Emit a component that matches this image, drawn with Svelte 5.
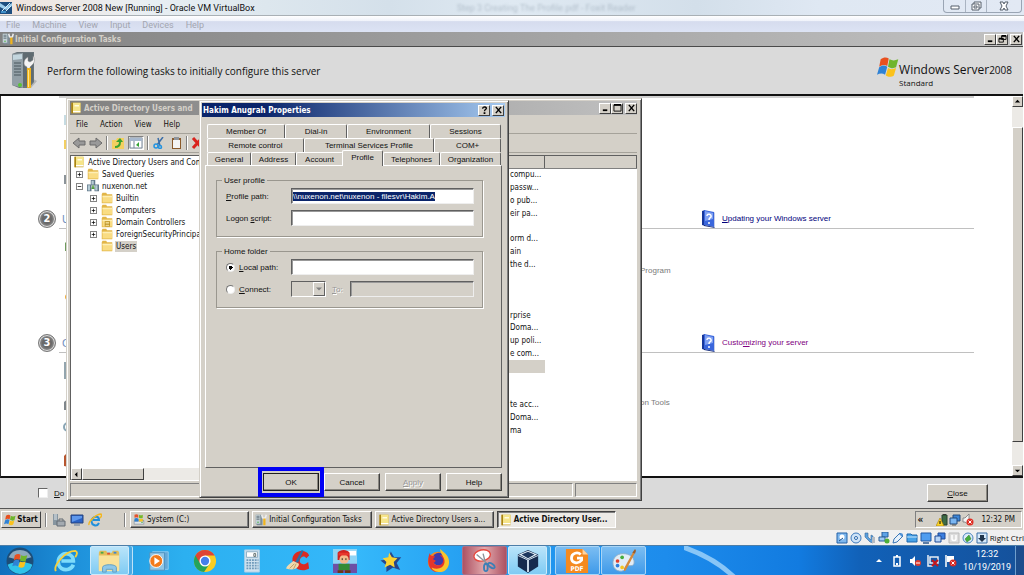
<script>
    import { onMount } from 'svelte';

    let profilePath = $state('\\\\nuxenon.net\\nuxenon - filesvr\\Hakim.A');
    let homeMode = $state('local');
    let activeTab = $state('Profile');
    let pathInput;

    const vboxMenu = ['File', 'Machine', 'View', 'Input', 'Devices', 'Help'];
    const mmcMenu = ['File', 'Action', 'View', 'Help'];

    const tabRows = [
        { name: 'back', tabs: ['Member Of', 'Dial-in', 'Environment', 'Sessions'] },
        { name: 'middle', tabs: ['Remote control', 'Terminal Services Profile', 'COM+'] },
        { name: 'front', tabs: ['General', 'Address', 'Account', 'Profile', 'Telephones', 'Organization'] }
    ];

    const tree = [
        { label: 'Active Directory Users and Com', icon: 'book', level: 'root', box: '' },
        { label: 'Saved Queries', icon: 'folder', level: 'one', box: '+' },
        { label: 'nuxenon.net', icon: 'domain', level: 'one', box: '-' },
        { label: 'Builtin', icon: 'folder', level: 'two', box: '+' },
        { label: 'Computers', icon: 'folder', level: 'two', box: '+' },
        { label: 'Domain Controllers', icon: 'ou', level: 'two', box: '+' },
        { label: 'ForeignSecurityPrincipals', icon: 'folder', level: 'two', box: '+' },
        { label: 'Users', icon: 'folder', level: 'two', box: '', selected: true }
    ];

    const descriptions = [
        'compu...', 'passw...', 'o pub...', 'eir pa...', '', 'orm d...', 'ain',
        'the d...', '', '', '', 'rprise', 'Doma...', 'up poli...', 'e com...',
        '', '', '', 'te acc...', 'Doma...', 'ma'
    ];
    const selectedRow = 15;

    const guestTasks = [
        { label: 'System (C:)', icon: 'drive' },
        { label: 'Initial Configuration Tasks', icon: 'server' },
        { label: 'Active Directory Users a...', icon: 'book' },
        { label: 'Active Directory User...', icon: 'book', active: true }
    ];

    const statusIcons = ['disk', 'cd', 'sound', 'net', 'usb', 'share', 'display', 'windows', 'rec', 'mouse', 'key'];

    const hostApps = [
        { icon: 'ie', state: '' },
        { icon: 'explorer', state: 'open stack' },
        { icon: 'player', state: '' },
        { icon: 'chrome', state: '' },
        { icon: 'calc', state: '' },
        { icon: 'ccleaner', state: '' },
        { icon: 'game', state: '' },
        { icon: 'star', state: '' },
        { icon: 'firefox', state: '' },
        { icon: 'snip', state: 'alert' },
        { icon: 'vbox', state: 'open stack' },
        { icon: 'foxit', state: 'running' },
        { icon: 'paint', state: 'running' }
    ];

    onMount(() => {
        pathInput.focus();
        pathInput.select();
    });
</script>

{#snippet small(name)}
    <svg class="ico" viewBox="0 0 16 16" aria-hidden="true">
        {#if name === 'book'}
            <path d="M2 1h12v14H2z" fill="#c9a227" />
            <path d="M4 1h10v11H4z" fill="#f6e58a" />
            <path d="M6 4h6v2H6z" fill="#fffbe0" />
            <path d="M2 1h2v14H2z" fill="#a98412" />
            <path d="M4 12h10v2H4z" fill="#fff" />
        {:else if name === 'folder' || name === 'ou'}
            <path d="M1 3l1-2h5l1 2h7v12H1z" fill="#e2b548" />
            <path d="M2 5h13v9H2z" fill="#f9dc83" />
            <path d="M2 5h13v2H2z" fill="#fdeeb5" />
            {#if name === 'ou'}
                <path d="M5 7h7v7H5z" fill="#b98d1e" />
                <path d="M6 8h5v1H6zM6 10h5v1H6zM6 12h5v1H6z" fill="#fff0b0" />
            {/if}
        {:else if name === 'domain'}
            <path d="M5 0h6v7H5zM0 6h6v9H0zM10 6h6v9h-6z" fill="#62798a" />
            <path d="M6 1h3v5H6zM1 7h3v7H1zM11 7h3v7h-3z" fill="#b7ccd6" />
            <path d="M8 7v5M6 11h4" stroke="#4d9a3a" stroke-width="2" />
        {:else if name === 'server'}
            <path d="M1 1h7l2 2v12H3L1 13z" fill="#7e8e98" />
            <path d="M1 1h6v12H1z" fill="#c4d0d6" />
            <path d="M2 3h4M2 5h4M2 7h4" stroke="#51606a" />
            <circle cx="4" cy="11" r="1" fill="#4db848" />
            <path d="M9 1l1 4 2 1 2-1 1-4" fill="none" stroke="#eee" stroke-width="2" />
            <path d="M11 6h3v9h-3z" fill="#f0b41c" />
        {:else if name === 'drive'}
            <path d="M1 9l2-2h10l2 2v5H1z" fill="#8f9aa3" />
            <path d="M2 10h12v3H2z" fill="#dfe5ea" />
            <path d="M11 11h2v1h-2z" fill="#38a838" />
            <path d="M2 1c2-1 3-1 5 0v4C5 4 4 4 2 5z" fill="#e5522b" />
            <path d="M8 1c2 1 3 1 5 0v4c-2 1-3 1-5 0z" fill="#76b82a" />
            <path d="M2 6c2-1 3-1 5 0v4H2z" fill="#2d7fd0" />
            <path d="M8 6c2 1 3 1 5 0v4H8z" fill="#f8c51c" />
        {/if}
    </svg>
{/snippet}

{#snippet flag()}
    <path d="M5 4c4-3 8-3 11-1l-2 10c-3-2-7-2-11 1z" fill="#e8501f" />
    <path d="M17 4c4 2 7 2 12 0l-3 11c-4 2-8 1-11-1z" fill="#6fb52c" />
    <path d="M3 15c4-3 7-3 11-1l-3 11c-3-2-7-2-11 0z" fill="#2f82d5" />
    <path d="M15 16c3 2 7 2 11 0l-3 10c-4 3-8 2-11 0z" fill="#fbc21b" />
{/snippet}

{#snippet helpBook()}
    <svg class="help-book" viewBox="0 0 16 18" aria-hidden="true">
        <path d="M1 1l3-1v16l-3-1z" fill="#17379b" />
        <path d="M3 0l10 2v15L3 15z" fill="#3a66dc" />
        <path d="M4 1l8 2v6L4 11z" fill="#7fa0f2" />
        <path d="M13 2l1 1v14l-1 1z" fill="#c7cfe6" />
        <path d="M3 15l10 2 1 1-11-2z" fill="#12297a" />
        <path d="M6 6c0-3 5-2 4 1-1 1-2 1-2 3" fill="none" stroke="#fff" stroke-width="1.5" />
        <circle cx="8" cy="13" r="1" fill="#fff" />
    </svg>
{/snippet}

{#snippet caption(kind)}
    <button class="cap" aria-label={kind}>
        <svg viewBox="0 0 10 9" aria-hidden="true">
            {#if kind === 'Minimize'}
                <path d="M2 7h5" stroke="#000" stroke-width="2" />
            {:else if kind === 'Maximize'}
                <path d="M1 1h8v7H1z" fill="none" stroke="#000" />
                <path d="M1 1h8" stroke="#000" stroke-width="2" />
            {:else if kind === 'Restore'}
                <path d="M4 1h5v4H4zM1 4h5v4H1z" fill="#d4d0c8" stroke="#000" />
                <path d="M4 1h5M1 4h5" stroke="#000" stroke-width="2" />
            {:else if kind === 'Help'}
                <path d="M3 3c0-3 5-2 4 0-1 1-2 1-2 3" fill="none" stroke="#000" stroke-width="1.5" />
                <path d="M4 7h2v2H4z" />
            {:else}
                <path d="M2 1l6 7M8 1L2 8" stroke="#000" stroke-width="1.6" />
            {/if}
        </svg>
    </button>
{/snippet}

<div class="screen">
    <header class="vbox-title">
        <svg class="vbox-logo" viewBox="0 0 12 12" aria-hidden="true">
            <path d="M0 0h12v12H0z" fill="#1d4f80" />
            <path d="M0 1l6 4 6-4v3L6 8 0 5z" fill="#9ed0ee" />
            <path d="M1 10L10 1M4 11l7-7" stroke="#d8effa" />
            <path d="M1 9h5v2H1z" fill="#3f8fc8" />
        </svg>
        <span>Windows Server 2008 New [Running] - Oracle VM VirtualBox</span>
        <span class="behind-glass">Step 3 Creating The Profile.pdf - Foxit Reader</span>
        <div class="aero-buttons">
            <button aria-label="Minimize window">
                <svg viewBox="0 0 12 10"><path d="M2 5h8v3H2z" fill="#fff" stroke="#555e6b" /></svg>
            </button>
            <button aria-label="Restore window">
                <svg viewBox="0 0 12 10"><path d="M4 1h7v6H4z" fill="#fff" stroke="#555e6b" /><path d="M2 3h7v6H2z" fill="#fff" stroke="#555e6b" /><path d="M4 5h3v2H4z" fill="#fff" stroke="#555e6b" /></svg>
            </button>
            <button class="wide" aria-label="Close window">
                <svg viewBox="0 0 12 10"><path d="M2 1h3l1 2 1-2h3L8 5l2 4H7L6 7 5 9H2l2-4z" fill="#fff" stroke="#555e6b" /></svg>
            </button>
        </div>
    </header>

    <nav class="vbox-menu">
        {#each vboxMenu as item}
            <button>{item}</button>
        {/each}
    </nav>

    <main class="guest">
        <div class="ict-title">
            {@render small('server')}
            <span>Initial Configuration Tasks</span>
            <div class="caps">
                {@render caption('Minimize')}
                {@render caption('Restore')}
                {@render caption('Close')}
            </div>
        </div>

        <div class="banner">
            <svg class="banner-server" viewBox="0 0 26 38" aria-hidden="true">
                <path d="M20 26l6 3-6 7z" fill="#b4b4b4" />
                <path d="M1 2l5-2h17v30l-5 6H8L1 33z" fill="#68747a" />
                <path d="M1 2l11-1v35L1 33z" fill="#929fa6" />
                <path d="M2 3l9-1v5L2 8z" fill="#c3d6de" />
                <path d="M3 11h7M3 14h7M3 17h7M3 20h7M3 23h7" stroke="#49565d" />
                <path d="M12 1h10v28l-4 5h-6z" fill="#5f6b71" />
                <circle cx="9" cy="33" r="2" fill="#58c436" />
                <path d="M13 11c0-3 2-5 4-6v4l2 1 3-2V4c2 2 2 6 0 8l-3 3v4h-3v-4c-2-1-3-2-3-4z" fill="#f4f4f4" stroke="#888" stroke-width=".5" />
                <path d="M16 16h4v20h-4z" fill="#f2b51d" />
                <path d="M17 18h1v17h-1z" fill="#ffe48a" />
            </svg>
            <h1>Perform the following tasks to initially configure this server</h1>
            <div class="brand">
                <svg viewBox="0 0 30 29" aria-hidden="true">{@render flag()}</svg>
                <div class="brand-text">
                    <p class="brand-name">Windows Server<span>2008</span></p>
                    <p class="brand-edition">Standard</p>
                </div>
            </div>
        </div>

        <div class="ict-body">
            <div class="tasks">
                <div class="rule-top"></div>
                <section>
                    <div class="step">
                        <b>2</b>
                        <span class="step-title">U</span>
                        <a href="#updating">{@render helpBook()}<span><u>U</u>pdating your Windows server</span></a>
                    </div>
                    <p class="note">Program</p>
                </section>
                <section>
                    <div class="step">
                        <b>3</b>
                        <span class="step-title">C</span>
                        <a class="visited" href="#customizing">{@render helpBook()}<span>Custo<u>m</u>izing your server</span></a>
                    </div>
                    <p class="note low">on Tools</p>
                </section>
                <svg class="task-icons" viewBox="0 0 6 380" aria-hidden="true">
                    <path d="M1 19h5v10H1z" fill="#c6dbe2" />
                    <path d="M1 44h5v9H1z" fill="#f2cf62" />
                    <path d="M1 79h5v9H1z" fill="#8b9399" />
                    <path d="M2 147l4-4v12H2z" fill="#6e9b5e" />
                    <circle cx="5" cy="201" r="3" fill="#f2ae3b" />
                    <path d="M1 266h5v17H1z" fill="#93a5ae" />
                    <path d="M1 306l5-4v12H1z" fill="#7f868b" />
                    <circle cx="5" cy="331" r="4" fill="none" stroke="#89a5b4" stroke-width="2" />
                    <path d="M1 360l5-5v16l-5-1z" fill="#b7562f" />
                </svg>
            </div>
            <div class="vscroll">
                <button class="arrow" aria-label="Scroll up"><svg viewBox="0 0 8 8"><path d="M1 5l3-3 3 3z" /></svg></button>
                <div class="track"><div class="thumb"></div></div>
                <button class="arrow" aria-label="Scroll down"><svg viewBox="0 0 8 8"><path d="M1 3l3 3 3-3z" /></svg></button>
            </div>
        </div>

        <div class="ict-footer">
            <label><input type="checkbox" /><span><u>D</u>o</span></label>
            <button class="btn close-btn"><u>C</u>lose</button>
        </div>

        <div class="window mmc">
            <div class="mmc-title">
                {@render small('book')}
                <span>Active Directory Users and</span>
                <div class="caps">
                    {@render caption('Minimize')}
                    {@render caption('Maximize')}
                    {@render caption('Close')}
                </div>
            </div>
            <nav class="mmc-menu">
                {#each mmcMenu as item}
                    <button>{item}</button>
                {/each}
            </nav>
            <div class="toolbar">
                <button aria-label="Back"><svg viewBox="0 0 14 12"><path d="M1 6l6-5v3h6v4H7v3z" fill="#999" stroke="#6b6b6b" /></svg></button>
                <button aria-label="Forward"><svg viewBox="0 0 14 12"><path d="M13 6L7 1v3H1v4h6v3z" fill="#999" stroke="#6b6b6b" /></svg></button>
                <i></i>
                <button aria-label="Up one level"><svg viewBox="0 0 14 12"><path d="M1 3h4l1-2h7v11H1z" fill="#f3cf60" /><path d="M4 10c4 0 5-2 5-5" fill="none" stroke="#39a22e" stroke-width="2" /><path d="M5 5l4-4 3 4z" fill="#39a22e" /></svg></button>
                <button class="pressed" aria-label="Show tree"><svg viewBox="0 0 14 12"><path d="M1 1h12v10H1z" fill="#fff" stroke="#77879b" /><path d="M1 1h12v3H1z" fill="#a7b8ce" /><path d="M5 4v7" stroke="#77879b" /><path d="M10 5v5L7 8z" fill="#35a335" /></svg></button>
                <i></i>
                <button aria-label="Cut"><svg viewBox="0 0 14 12"><path d="M11 0L5 8M6 1l2 8" stroke="#3b6ea8" stroke-width="1.5" /><circle cx="4" cy="9" r="2" fill="none" stroke="#2493df" stroke-width="1.5" /><circle cx="8" cy="10" r="1.5" fill="none" stroke="#2493df" stroke-width="1.5" /></svg></button>
                <button aria-label="Paste"><svg viewBox="0 0 14 12"><path d="M3 1h9v11H3z" fill="#8a5a2b" /><path d="M4 3h7v8H4z" fill="#f4f4f4" /><path d="M5 0h5v3H5z" fill="#8f959c" /></svg></button>
                <i></i>
                <button aria-label="Delete"><svg viewBox="0 0 14 12"><path d="M2 1l9 10M11 1L2 11" stroke="#d9231d" stroke-width="3" /></svg></button>
            </div>
            <div class="panes">
                <div class="tree-pane">
                    <ul>
                        {#each tree as node}
                            <li class={node.level}>
                                {#if node.level !== 'root'}
                                    <span class="expander" class:blank={!node.box}>
                                        {#if node.box}
                                            <svg viewBox="0 0 7 7" aria-hidden="true"><path d={node.box === '+' ? 'M1 3.5h5M3.5 1v5' : 'M1 3.5h5'} stroke="#000" /></svg>
                                        {/if}
                                    </span>
                                {/if}
                                {@render small(node.icon)}
                                <span class="node" class:selected={node.selected}>{node.label}</span>
                            </li>
                        {/each}
                    </ul>
                    <div class="hscroll">
                        <button class="arrow" aria-label="Scroll left"><svg viewBox="0 0 8 8"><path d="M5 1L2 4l3 3z" /></svg></button>
                        <div class="thumb"></div>
                    </div>
                </div>
                <div class="list-pane">
                    <table>
                        <thead><tr><th aria-label="Description"></th><th aria-label="Blank"></th></tr></thead>
                        <tbody>
                            {#each descriptions as text, i}
                                <tr><td class:selected={i === selectedRow}>{text}</td><td></td></tr>
                            {/each}
                        </tbody>
                    </table>
                </div>
            </div>
            <div class="mmc-status"><span></span><span></span></div>
        </div>

        <div class="window dialog" role="dialog" aria-label="Hakim Anugrah Properties">
            <div class="dialog-title">
                <span>Hakim Anugrah Properties</span>
                <div class="caps">
                    {@render caption('Help')}
                    {@render caption('Close')}
                </div>
            </div>
            <div class="tabs">
                {#each tabRows as row}
                    <div class="tab-row {row.name}">
                        {#each row.tabs as tab}
                            <button class="tab" class:active={tab === activeTab} onclick={() => (activeTab = tab)}>{tab}</button>
                        {/each}
                    </div>
                {/each}
            </div>
            <div class="panel">
                <fieldset>
                    <legend>User profile</legend>
                    <div class="field">
                        <label for="profile-path"><span><u>P</u>rofile path:</span></label>
                        <input id="profile-path" type="text" bind:this={pathInput} bind:value={profilePath} spellcheck="false" />
                    </div>
                    <div class="field">
                        <label for="logon-script"><span>Logon <u>s</u>cript:</span></label>
                        <input id="logon-script" type="text" />
                    </div>
                </fieldset>
                <fieldset>
                    <legend>Home folder</legend>
                    <div class="field">
                        <label><input type="radio" value="local" bind:group={homeMode} /><span><u>L</u>ocal path:</span></label>
                        <input type="text" aria-label="Local path" />
                    </div>
                    <div class="field">
                        <label><input type="radio" value="connect" bind:group={homeMode} /><span><u>C</u>onnect:</span></label>
                        <div class="connect">
                            <span class="drop">
                                <select disabled aria-label="Drive"><option></option></select>
                                <svg viewBox="0 0 8 8" aria-hidden="true"><path d="M0 2l4 4 4-4z" fill="#808080" /></svg>
                            </span>
                            <label class="to" for="connect-to"><u>T</u>o:</label>
                            <input id="connect-to" type="text" disabled />
                        </div>
                    </div>
                </fieldset>
            </div>
            <div class="dialog-buttons">
                <button class="btn default">OK</button>
                <button class="btn">Cancel</button>
                <button class="btn" disabled><u>A</u>pply</button>
                <button class="btn">Help</button>
            </div>
        </div>
    </main>

    <div class="guest-bar">
        <button class="start">
            <svg viewBox="0 0 30 29" aria-hidden="true">{@render flag()}</svg>Start
        </button>
        <i></i>
        <div class="quick">
            <svg viewBox="0 0 14 14" aria-label="Server Manager"><path d="M1 1h5v11H1z" fill="#8796a0" /><path d="M2 2h3M2 4h3M2 6h3" stroke="#e4ebef" /><path d="M5 8h8v5H5z" fill="#a3aab0" stroke="#636b72" /><path d="M7 8V6h4v2" fill="none" stroke="#636b72" /></svg>
            <svg viewBox="0 0 14 14" aria-label="Show Desktop"><path d="M1 2h12v8H1z" fill="#2b62c4" stroke="#26437c" /><path d="M2 3h10v2L2 9z" fill="#5f98ec" /><path d="M4 12h6" stroke="#9aa4b0" stroke-width="2" /></svg>
            <svg viewBox="0 0 14 14" aria-label="Internet Explorer"><path d="M11 10c-1 2-3 3-5 2-3-1-3-5-1-7s6-2 6 2H5" fill="none" stroke="#1f8fdc" stroke-width="2" /><path d="M1 12C0 9 8 1 13 1c1 1 0 3-1 4" fill="none" stroke="#f3b71f" stroke-width="1.4" /></svg>
        </div>
        <i></i>
        <div class="guest-tasks">
            {#each guestTasks as task}
                <button class:active={task.active}>{@render small(task.icon)}<span>{task.label}</span></button>
            {/each}
        </div>
        <div class="guest-tray">
            <b>«</b>
            <svg viewBox="0 0 12 12" aria-hidden="true"><path d="M6 1h5v10H6z" fill="#3d6b45" stroke="#28432d" /><path d="M7 0h3v1H7z" fill="#333" /><path d="M4 4l4 8H0z" fill="#fbd327" stroke="#a67d00" stroke-width=".6" /><path d="M4 7v3" stroke="#000" /></svg>
            <svg viewBox="0 0 12 12" aria-hidden="true"><path d="M4 1h7v6H4z" fill="#3d86d8" stroke="#234a7d" /><path d="M1 4h7v6H1z" fill="#7bb6f1" stroke="#234a7d" /><path d="M3 11h4" stroke="#555" /></svg>
            <svg viewBox="0 0 12 12" aria-hidden="true"><path d="M1 4h2l4-4v11L3 8H1z" fill="#f5f5f5" stroke="#777" stroke-width=".8" /><circle cx="8" cy="8" r="3.5" fill="#e02f24" /><path d="M6.5 6.5l3 3M9.5 6.5l-3 3" stroke="#fff" /></svg>
            <span>12:32 PM</span>
        </div>
    </div>

    <div class="vbox-status">
        {#each statusIcons as name}
            <svg viewBox="0 0 12 12" aria-hidden="true">
                {#if name === 'disk'}
                    <path d="M1 1h10v10H1z" fill="#7db7ee" stroke="#2463a8" /><circle cx="6" cy="5" r="2.5" fill="#fff" /><path d="M3 9l4-3" stroke="#1d4f8b" />
                {:else if name === 'cd'}
                    <circle cx="6" cy="6" r="5" fill="#cfe4f8" stroke="#3b78bb" /><circle cx="6" cy="6" r="1.5" fill="#fff" stroke="#2a67ad" />
                {:else if name === 'sound'}
                    <path d="M1 1h3v4l3 3V3l2 1v7l-3-1-5-5z" fill="#5aa0df" stroke="#3b6a9b" stroke-width=".6" /><path d="M8 5h3v6H8z" fill="#b5bcc4" />
                {:else if name === 'net'}
                    <path d="M4 0h6v5H4z" fill="#5ea3e6" stroke="#2b5f99" /><path d="M1 5h6v4H1z" fill="#9ecbf3" stroke="#2b5f99" /><circle cx="9" cy="9" r="2.5" fill="#4fb037" />
                {:else if name === 'usb'}
                    <path d="M1 11l1-4 6-6 3 3-6 6z" fill="#e6f1fb" stroke="#3a76b6" /><path d="M7 2l3 3 1-3-2-1z" fill="#5193d7" />
                {:else if name === 'share'}
                    <path d="M1 2h4l1 1h5v7H1z" fill="#46a2e8" stroke="#1c66ad" /><path d="M1 5h10" stroke="#c8e5fb" />
                {:else if name === 'display'}
                    <path d="M1 1h10v8H1z" fill="#4f9df0" stroke="#2059a3" /><path d="M3 11h6" stroke="#5c7ea6" stroke-width="2" />
                {:else if name === 'windows'}
                    <path d="M4 1h7v6H4z" fill="#3b7fe0" stroke="#1f4b96" /><path d="M1 4h6v6H1z" fill="#b6d4f6" stroke="#1f4b96" />
                {:else if name === 'rec'}
                    <path d="M1 1h10v10H1z" fill="#ddd" stroke="#bbb" /><path d="M4 3v4c0 2 4 2 4 0V3" fill="none" stroke="#fff" stroke-width="1.5" />
                {:else if name === 'mouse'}
                    <circle cx="6" cy="6" r="5" fill="#dbeaf8" stroke="#4a84bd" /><path d="M3 7l4-4 2 4-4 3z" fill="#46ad3b" stroke="#2c7a24" stroke-width=".5" />
                {:else}
                    <path d="M1 1h10v10H1z" fill="#d6e9fa" stroke="#3a6ea5" /><path d="M4 3h4v3h2L6 10 2 6h2z" fill="#20354c" />
                {/if}
            </svg>
        {/each}
        <span>Right Ctrl</span>
    </div>

    <footer class="host-bar">
        <svg class="glow" viewBox="0 0 340 30" preserveAspectRatio="none" aria-hidden="true">
            <path d="M-4 0C20 8 36 18 50 32" fill="none" stroke="#a4d6fb" stroke-width="5" />
        </svg>
        <button class="orb" aria-label="Start menu">
            <svg viewBox="0 0 54 54" aria-hidden="true">
                <circle cx="27" cy="27" r="26" fill="#1d4d77" />
                <path d="M3 34a25 25 0 0 0 48 0C38 28 16 28 3 34z" fill="#2fc3ea" />
                <path d="M5 20a24 24 0 0 1 44 0C36 25 18 25 5 20z" fill="#8ca9bd" />
                <g transform="translate(12 12)">{@render flag()}</g>
            </svg>
        </button>
        <div class="apps">
            {#each hostApps as app}
                <button class="app {app.state}" aria-label={app.icon}>
                    <svg viewBox="0 0 26 26" aria-hidden="true">
                        {#if app.icon === 'ie'}
                            <path d="M21 17c-2 5-8 7-13 4-5-4-4-11 0-14 5-4 13-1 13 6H8" fill="none" stroke="#7ddcfb" stroke-width="4" />
                            <path d="M2 24C-1 18 12 2 23 2c3 1 2 4 0 7" fill="none" stroke="#f6cf3c" stroke-width="2" />
                        {:else if app.icon === 'explorer'}
                            <path d="M2 4l1-2h7l1 2h5l1-2h6l1 2v19H2z" fill="#e4bd58" />
                            <path d="M2 7h22v17H2z" fill="#fae29a" />
                            <path d="M4 3h3v2H4z" fill="#4aa84a" /><path d="M11 4h3v2h-3z" fill="#e24f33" /><path d="M18 3h3v2h-3z" fill="#3f87d1" />
                            <path d="M6 25v-5c0-4 15-4 15 0v5h-4v-3h-7v3z" fill="#8ec7e8" stroke="#5c9cc2" />
                        {:else if app.icon === 'player'}
                            <path d="M6 3h17v19H6z" fill="#62a9d9" stroke="#91cdef" />
                            <path d="M3 4h16v19H3z" fill="#8fc6e6" stroke="#4e92bf" />
                            <circle cx="10" cy="13" r="7" fill="#f27a1a" stroke="#fff" />
                            <path d="M8 9l6 4-6 4z" fill="#fff" />
                        {:else if app.icon === 'chrome'}
                            <circle cx="13" cy="13" r="12" fill="#f9cd22" />
                            <path d="M13 13L2.6 7A12 12 0 0 1 23.4 7H13z" fill="#de4435" />
                            <path d="M2.6 7A12 12 0 0 0 12 25l6-9-5-3z" fill="#24a35a" />
                            <path d="M2.6 7L8 16l5-9z" fill="#de4435" />
                            <circle cx="13" cy="13" r="6" fill="#fff" />
                            <circle cx="13" cy="13" r="4.5" fill="#447fec" />
                        {:else if app.icon === 'calc'}
                            <path d="M5 1h16v24H5z" fill="#cfe2ef" stroke="#a9cde6" />
                            <path d="M7 3h12v6H7z" fill="#fff" stroke="#89aac1" />
                            <path d="M15 5h2v3h-2z" fill="none" stroke="#566" />
                            <path d="M7 12h13M7 15h13M7 18h13M7 21h13" stroke="#6f9abb" stroke-width="2" stroke-dasharray="2 1" />
                        {:else if app.icon === 'ccleaner'}
                            <path d="M25 7C23 0 9 0 7 10c-1 11 10 16 18 11l-1-7c-4 4-10 3-9-2 1-4 5-5 7-2z" fill="#db2b22" />
                            <path d="M17 1l2 1-6 13-3-1z" fill="#2e6ea6" />
                            <path d="M8 13l6 3c0 5-6 8-14 5 1-3 4-5 8-8z" fill="#efd9ae" />
                            <path d="M4 21l5-5M8 22l3-6" stroke="#c09a5c" />
                        {:else if app.icon === 'game'}
                            <path d="M0 0h26v26H0z" fill="#8fd4f5" />
                            <path d="M0 16h26v10H0z" fill="#6d50a5" />
                            <path d="M16 2h9v5h-9z" fill="#fff" />
                            <path d="M5 4c3-4 10-4 13 0v8H5z" fill="#cf2020" />
                            <circle cx="12" cy="11" r="5" fill="#f4b98c" />
                            <path d="M6 4h11v3H6z" fill="#e8352c" />
                            <path d="M10 10v2M14 10v2" stroke="#221" />
                            <path d="M6 16h12v7H6z" fill="#338b35" />
                            <path d="M5 23h6v3H5zM13 23h6v3h-6z" fill="#6d3419" />
                        {:else if app.icon === 'star'}
                            <path d="M13 5l3 5 6 0-4 5 3 6-6-2-6 4 0-6-5-4 6-1z" fill="#27478c" stroke="#27478c" stroke-width="2" />
                            <path d="M11 4l3 5 6 1-4 4 1 6-5-3-6 3 2-6-4-4 6-1z" fill="#fbd433" />
                        {:else if app.icon === 'firefox'}
                            <circle cx="13" cy="14" r="11" fill="#f5891f" />
                            <circle cx="14" cy="11" r="7" fill="#3c3baf" />
                            <path d="M4 4c0 4 3 3 6 4-2 2-3 3-1 4 2 0 2 2-1 3 2 4 8 4 10 0 2-4-1-7-3-8 5-1 8 3 8 8 0 7-5 10-10 10C4 25 0 15 4 4z" fill="#e5352b" />
                            <path d="M15 0c5 4 10 7 10 14s-5 11-10 11c-4 0-8-2-9-5 6 3 13 1 14-5s-4-8-5-15z" fill="#fbc42d" />
                        {:else if app.icon === 'snip'}
                            <ellipse cx="11" cy="7" rx="9" ry="6" fill="#fff" stroke="#e6483f" stroke-width="1.5" transform="rotate(-12 11 7)" />
                            <path d="M5 6l13 11M12 5l3 12" stroke="#8d939a" stroke-width="1.5" />
                            <ellipse cx="21" cy="18" rx="4" ry="2" fill="none" stroke="#3b7fb6" stroke-width="2" transform="rotate(35 21 18)" />
                            <ellipse cx="15" cy="20" rx="2" ry="4" fill="none" stroke="#3b7fb6" stroke-width="2" />
                        {:else if app.icon === 'vbox'}
                            <path d="M13 1l11 5v13l-11 7L2 19V6z" fill="#162b4e" />
                            <path d="M13 2l10 4-10 5L3 6z" fill="#e5f1fa" /><path d="M13 3l7 3-7 4-7-4z" fill="#1d375e" />
                            <path d="M13 12v13" stroke="#d7e7f5" stroke-width="2" />
                            <path d="M2 7l11 5 11-5" fill="none" stroke="#d7e7f5" />
                        {:else if app.icon === 'foxit'}
                            <path d="M1 0h18l6 6v20H1z" fill="#f58a1f" />
                            <path d="M19 0v6h6z" fill="#ffd3a1" />
                            <path d="M17 6c-3-3-10-2-10 4 0 5 7 7 11 2v-2h-5" fill="none" stroke="#fff" stroke-width="3" />
                            <text x="13" y="24" text-anchor="middle" font-size="7" font-weight="bold" fill="#fff">PDF</text>
                        {:else}
                            <path d="M12 5c7 0 12 4 12 9s-4 4-7 4-2 6-7 6C4 24 1 20 1 15S5 5 12 5z" fill="#e2edf6" stroke="#8bacc8" />
                            <circle cx="6" cy="13" r="2" fill="#e1402e" /><circle cx="11" cy="9" r="2" fill="#45ad3e" /><circle cx="6" cy="18" r="2" fill="#2f7ede" /><circle cx="11" cy="20" r="2" fill="#f3c524" />
                            <path d="M23 3l2 1-10 19-2 1 0-3z" fill="#d5893a" />
                            <path d="M22 4l3-4 1 2-1 3z" fill="#9b5d2a" />
                        {/if}
                    </svg>
                </button>
            {/each}
        </div>
        <div class="host-tray">
            <svg viewBox="0 0 12 12" aria-label="Show hidden icons"><path d="M3 7l3-3 3 3z" fill="#fff" /></svg>
            <svg viewBox="0 0 12 12" aria-label="Battery"><path d="M3 2h6v9H3z" fill="none" stroke="#fff" stroke-width="1.5" /><path d="M5 0h2v2H5zM5 8h2v2H5z" fill="#fff" /></svg>
            <svg viewBox="0 0 12 12" aria-label="Volume"><path d="M1 4h2l3-3v10L3 8H1z" fill="#fff" /><circle cx="9" cy="8" r="3" fill="#e23b2c" /><path d="M7 8h4" stroke="#fff" /></svg>
            <svg viewBox="0 0 12 12" aria-label="Network"><path d="M3 2h8v6H3zM1 0v5M1 5v6h5" fill="none" stroke="#e8eef5" stroke-width="1.5" /><path d="M5 5l6 6M11 5l-6 6" stroke="#c4161c" stroke-width="2" /></svg>
            <svg viewBox="0 0 12 12" aria-label="Action Center"><path d="M1 0v12" stroke="#fff" stroke-width="1.5" /><path d="M2 1h7v6H2z" fill="#fff" /><circle cx="8" cy="8" r="3.5" fill="#d92b25" /><path d="M6.5 6.5l3 3M9.5 6.5l-3 3" stroke="#fff" /></svg>
            <time>12:32<br />10/19/2019</time>
            <button class="peek" aria-label="Show desktop"></button>
        </div>
    </footer>
</div>

<style>
    :global(body) {
        margin: 0;
        font-family: "DejaVu Sans Condensed", "DejaVu Sans", sans-serif;
        font-size: 8px;
        color: #111;
        overflow: hidden;
    }

    button, input, select {
        font: inherit;
        color: inherit;
        margin: 0;
        padding: 0;
        border: 0;
        background: none;
        border-radius: 0;
        box-sizing: border-box;
    }

    svg {
        display: block;
        flex: none;
    }

    p, h1, ul {
        margin: 0;
        padding: 0;
    }

    .screen {
        display: flex;
        flex-direction: column;
        height: 100vh;
    }

    .ico {
        width: 12px;
        height: 12px;
    }

    /* host window frame */
    .vbox-title {
        display: flex;
        align-items: center;
        height: 16px;
        box-sizing: border-box;
        border-bottom: 1px solid #a9b0b5;
        background: linear-gradient(90deg, #f0e3dc 0, #e9eff3 14%, #dde7ee 26%, #d4e0ea 38%, #dfe9f2 50%, #d3dfea 68%, #dfe8f3 80%, #e2e9f4);
        font: 9px Roboto, "Noto Sans", sans-serif;
        gap: 4px;
    }

    .vbox-logo {
        width: 12px;
        height: 12px;
    }

    /* title of the host window below, seen through the frame */
    .behind-glass {
        margin-left: 198px;
        color: #8b9aa8;
        opacity: 0.5;
        filter: blur(1px);
        white-space: nowrap;
    }

    .aero-buttons {
        display: flex;
        align-self: flex-start;
        margin-left: auto;
        margin-right: 2px;
        border: 1px solid #9aa5b4;
        border-top: 0;
        border-radius: 0 0 4px 4px;
    }

    .aero-buttons button {
        width: 21px;
        height: 12px;
        display: grid;
        place-items: center;
    }

    .aero-buttons button + button {
        border-left: 1px solid #aab4c2;
    }

    .aero-buttons .wide {
        width: 35px;
    }

    .aero-buttons svg {
        width: 12px;
        height: 10px;
    }

    .vbox-menu {
        display: flex;
        align-items: center;
        gap: 12px;
        height: 16px;
        padding: 1px 6px 0;
        box-sizing: border-box;
        background: linear-gradient(#fff, #f0f3fa 30%, #d6dcee 35%, #dce3f4);
        color: #a3a6b0;
        font: 9px Roboto, "Noto Sans", sans-serif;
    }

    /* guest desktop */
    .guest {
        position: relative;
        flex: 1;
        min-height: 0;
        display: flex;
        flex-direction: column;
        margin-right: 1px;
    }

    .ict-title {
        display: flex;
        align-items: center;
        gap: 1px;
        height: 14px;
        padding: 0 1px 0 2px;
        background: linear-gradient(90deg, #828282, #c2c2c2);
        border-bottom: 1px solid #4a4a4a;
        color: #d4d0c8;
        font-weight: bold;
    }

    .caps {
        display: flex;
        margin-left: auto;
    }

    .cap {
        display: grid;
        place-items: center;
        width: 12px;
        height: 11px;
        background: #d4d0c8;
        border: 1px solid;
        border-color: #fff #404040 #404040 #fff;
    }

    .cap:last-child {
        margin-left: 2px;
    }

    .cap svg {
        width: 9px;
        height: 8px;
    }

    .banner {
        display: flex;
        align-items: center;
        height: 47px;
        padding: 0 11px;
        background: #dadada;
        border-bottom: 2px solid #111;
    }

    .banner-server {
        width: 26px;
        height: 38px;
    }

    h1 {
        margin-left: 10px;
        font: 10px "Open Sans", sans-serif;
    }

    .brand {
        display: flex;
        align-items: center;
        margin-left: auto;
    }

    .brand svg {
        width: 22px;
        height: 22px;
        margin-bottom: 8px;
    }

    .brand-text {
        margin-top: 9px;
        font-family: "Open Sans", sans-serif;
    }

    .brand-name {
        font-size: 12px;
        line-height: 14px;
    }

    .brand-name span {
        font-size: 10px;
    }

    .brand-edition {
        line-height: 11px;
    }

    .ict-body {
        flex: 1;
        min-height: 0;
        display: flex;
        background: #fff;
        border-left: 1px solid #333;
        border-bottom: 2px solid #111;
        font-family: "Liberation Sans", sans-serif;
    }

    .tasks {
        position: relative;
        flex: 1;
        padding-left: 37px;
        padding-right: 38px;
        overflow: hidden;
    }

    .rule-top {
        height: 2px;
        margin: 0 0 110px 21px;
        background: #d0d0d0;
    }

    section {
        height: 124px;
    }

    .step {
        display: flex;
        align-items: center;
        height: 21px;
        position: relative;
    }

    .step::after {
        content: "";
        position: absolute;
        left: 21px;
        right: 0;
        bottom: 0;
        height: 1px;
        background: #c0c0c0;
    }

    .step b {
        width: 16px;
        height: 16px;
        border: 1px solid #777;
        border-radius: 50%;
        background: radial-gradient(#6a6a6a 40%, #c4c4c4);
        box-shadow: inset 0 0 0 1px #ddd;
        color: #fff;
        font: bold 11px/16px "DejaVu Sans Condensed", sans-serif;
        text-align: center;
    }

    .step-title {
        margin-left: 6px;
        font-size: 11px;
        color: #6f8fbf;
    }

    .step a {
        display: flex;
        align-items: center;
        gap: 5px;
        position: absolute;
        left: 663px;
        color: #00007b;
        text-decoration: none;
    }

    .step a.visited {
        color: #800080;
    }

    .help-book {
        width: 16px;
        height: 18px;
    }

    .note {
        margin: 37px 0 0 602px;
        color: #7a7a7a;
    }

    .note.low {
        margin-top: 45px;
    }

    .task-icons {
        position: absolute;
        left: 62px;
        top: 0;
        width: 6px;
        height: 380px;
    }

    .vscroll {
        display: flex;
        flex-direction: column;
        width: 11px;
        background: #eceae6;
    }

    .arrow, .thumb {
        background: #d4d0c8;
        border: 1px solid;
        border-color: #fff #404040 #404040 #fff;
        box-sizing: border-box;
    }

    .arrow {
        width: 11px;
        height: 11px;
        display: grid;
        place-items: center;
        flex: none;
    }

    .arrow svg {
        width: 7px;
        height: 7px;
    }

    .track {
        flex: 1;
        padding: 20px 0 23px;
        display: flex;
    }

    .track .thumb {
        flex: 1;
    }

    .ict-footer {
        display: flex;
        align-items: center;
        justify-content: space-between;
        height: 30px;
        padding: 0 35px 0 38px;
        background: #dadada;
        border-bottom: 1px solid #555;
        font-family: "Liberation Sans", sans-serif;
    }

    .ict-footer label {
        display: flex;
        align-items: center;
        gap: 6px;
    }

    input[type="checkbox"] {
        appearance: none;
        width: 10px;
        height: 10px;
        background: #fff;
        border: 1px solid;
        border-color: #666 #eee #eee #666;
    }

    .btn {
        height: 18px;
        background: #d4d0c8;
        border: 1px solid;
        border-color: #fff #404040 #404040 #fff;
        box-shadow: inset -1px -1px #8b8881;
    }

    .close-btn {
        width: 61px;
    }

    .window {
        position: absolute;
        box-sizing: border-box;
        display: flex;
        flex-direction: column;
        background: #d4d0c8;
        border: 1px solid;
        border-color: #d4d0c8 #404040 #404040 #d4d0c8;
        box-shadow: inset 1px 1px #fff, inset -1px -1px #808080;
    }

    /* directory console */
    .mmc {
        left: 66px;
        top: 66px;
        width: 576px;
        height: 403px;
        padding: 2px 4px 3px 3px;
    }

    .mmc-title {
        display: flex;
        align-items: center;
        gap: 2px;
        height: 14px;
        background: linear-gradient(90deg, #808080, #c0c0c0);
        color: #d4d0c8;
        font-weight: bold;
    }

    .mmc-menu {
        display: flex;
        align-items: center;
        gap: 12px;
        height: 18px;
        padding-left: 6px;
        border-bottom: 1px solid #a5a29a;
    }

    .toolbar {
        display: flex;
        align-items: center;
        gap: 3px;
        height: 18px;
        padding-left: 2px;
        border-bottom: 1px solid #a5a29a;
    }

    .toolbar button svg {
        width: 14px;
        height: 12px;
    }

    .toolbar i, .guest-bar i {
        width: 1px;
        height: 14px;
        background: #808080;
        border-right: 1px solid #fff;
    }

    .toolbar .pressed {
        border: 1px solid;
        border-color: #808080 #fff #fff #808080;
        background: #e9e7e2;
    }

    .panes {
        flex: 1;
        min-height: 0;
        display: flex;
        margin-top: 2px;
        border-top: 1px solid #606060;
        border-bottom: 1px solid #fff;
    }

    .tree-pane {
        display: flex;
        flex-direction: column;
        justify-content: space-between;
        width: 140px;
        overflow: hidden;
        background: #fff;
        border-left: 1px solid #606060;
    }

    ul {
        list-style: none;
    }

    li {
        display: flex;
        align-items: center;
        gap: 2px;
        height: 12px;
        white-space: nowrap;
    }

    .root {
        padding-left: 2px;
    }

    .one {
        padding-left: 5px;
    }

    .two {
        padding-left: 19px;
    }

    .expander {
        width: 5px;
        height: 5px;
        margin-right: 2px;
        border: 1px solid #848484;
    }

    .expander.blank {
        border-color: transparent;
    }

    .expander svg {
        width: 5px;
        height: 5px;
    }

    .node {
        padding: 0 1px;
        line-height: 11px;
    }

    .node.selected, td.selected {
        background: #d4d0c8;
    }

    .hscroll {
        display: flex;
        background: #eceae6;
    }

    .hscroll .arrow, .hscroll .thumb {
        height: 12px;
    }

    .hscroll .thumb {
        width: 62px;
    }

    .list-pane {
        flex: 1;
        background: #fff;
    }

    table {
        width: 100%;
        height: 281px;
        border-collapse: collapse;
        table-layout: fixed;
    }

    th {
        height: 12px;
        padding: 0;
        background: #d4d0c8;
        border-right: 1px solid #606060;
        border-bottom: 1px solid #808080;
    }

    th:first-child {
        width: 333px;
    }

    td {
        height: 12px;
        padding: 0 0 0 299px;
        line-height: 10px;
    }

    .mmc-status {
        display: flex;
        gap: 2px;
        height: 14px;
        margin-top: 2px;
    }

    .mmc-status span {
        flex: 1;
        border: 1px solid;
        border-color: #808080 #fff #fff #808080;
    }

    .mmc-status span:last-child {
        flex: 0 0 60px;
    }

    /* properties dialog */
    .dialog {
        left: 199px;
        top: 68px;
        width: 310px;
        height: 398px;
        padding: 2px 3px 6px 2px;
        font-family: "Liberation Sans", sans-serif;
    }

    .dialog-title {
        display: flex;
        align-items: center;
        height: 14px;
        padding: 0 1px;
        background: linear-gradient(90deg, #0a246a 20%, #a6caf0);
        color: #fff;
        font: bold 8px "DejaVu Sans Condensed", sans-serif;
    }

    .tabs {
        padding: 7px 4px 0 5px;
    }

    .tab-row {
        display: grid;
        height: 14px;
    }

    .back {
        grid-template-columns: 78fr 62fr 83fr 71fr;
    }

    .middle {
        grid-template-columns: 97fr 131fr 67fr;
    }

    .front {
        grid-template-columns: 44fr 45fr 47fr 40fr 57fr 61fr;
        height: 13px;
    }

    .tab {
        border: 1px solid;
        border-color: #fff #606060 transparent #fff;
        border-bottom: 0;
        border-radius: 2px 2px 0 0;
    }

    .tab.active {
        position: relative;
        margin: -2px 0 -1px -1px;
        background: #d4d0c8;
        padding-bottom: 3px;
    }

    .panel {
        flex: 1;
        margin: 0 3px 0 3px;
        padding: 9px 18px 0 10px;
        border: 1px solid;
        border-color: #fff #606060 #606060 #fff;
    }

    fieldset {
        margin: 0 0 9px;
        padding: 0 8px 10px 9px;
        border: 1px solid #9a978f;
        box-shadow: 1px 1px #fff;
        min-width: 0;
    }

    legend {
        margin-left: -4px;
        padding: 0 2px;
        line-height: 11px;
    }

    .field {
        display: flex;
        align-items: center;
        height: 16px;
        margin-top: 6px;
    }

    .field:nth-of-type(1) {
        margin-top: 2px;
    }

    .field > label {
        display: flex;
        align-items: center;
        gap: 4px;
        width: 65px;
    }

    .field input[type="text"] {
        flex: 1;
        min-width: 0;
        height: 16px;
        padding: 0 1px;
        background: #fff;
        border: 1px solid;
        border-color: #606060 #eee #eee #606060;
        box-shadow: inset 1px 1px #999;
        line-height: 11px;
        outline: 0;
    }

    .field input[type="text"]:disabled, select:disabled {
        background: #d4d0c8;
        opacity: 1;
    }

    input::selection {
        background: #0a246a;
        color: #fff;
    }

    input[type="radio"] {
        appearance: none;
        width: 9px;
        height: 9px;
        border: 1px solid #777;
        border-radius: 50%;
        border-bottom-color: #eee;
        border-right-color: #eee;
        background: #fff;
    }

    input[type="radio"]:checked {
        background: radial-gradient(#000 0 2px, #fff 2px);
    }

    .connect {
        flex: 1;
        display: flex;
        align-items: center;
    }

    .drop {
        position: relative;
    }

    .drop svg {
        position: absolute;
        top: 1px;
        right: 1px;
        width: 12px;
        height: 14px;
        box-sizing: border-box;
        padding: 2px;
        border: 1px solid;
        border-color: #fff #606060 #606060 #fff;
        pointer-events: none;
    }

    select {
        display: block;
        appearance: none;
        width: 35px;
        height: 16px;
        border: 1px solid;
        border-color: #606060 #fff #fff #606060;
    }

    .to {
        width: 18px;
        margin-left: 6px;
        color: #999;
        text-shadow: 1px 1px #fff;
    }

    .dialog-buttons {
        display: flex;
        justify-content: flex-end;
        gap: 5px;
        padding: 5px 3px 0 0;
    }

    .dialog-buttons .btn {
        width: 56px;
    }

    .btn:disabled {
        color: #999;
        text-shadow: 1px 1px #fff;
    }

    .dialog-buttons .default {
        position: relative;
        border-color: #202020;
    }

    .default::after {
        content: "";
        position: absolute;
        inset: -7px -6px;
        border: 4px solid #0000f5;
    }

    /* guest taskbar */
    .guest-bar {
        display: flex;
        align-items: center;
        gap: 4px;
        height: 21px;
        padding-left: 1px;
        margin-right: 1px;
        background: #d4d0c8;
    }

    .start {
        display: flex;
        align-items: center;
        justify-content: center;
        gap: 1px;
        width: 40px;
        height: 17px;
        border: 1px solid;
        border-color: #fff #404040 #404040 #fff;
        font-weight: bold;
    }

    .start svg {
        width: 12px;
        height: 12px;
    }

    .quick {
        display: flex;
        gap: 4px;
        width: 68px;
        padding-left: 1px;
    }

    .quick svg {
        width: 14px;
        height: 14px;
    }

    .guest-tasks {
        flex: 0 1 486px;
        display: grid;
        grid-template-columns: repeat(4, 1fr);
        gap: 3px;
    }

    .guest-tasks button {
        display: flex;
        align-items: center;
        gap: 2px;
        height: 17px;
        padding-left: 2px;
        border: 1px solid;
        border-color: #fff #404040 #404040 #fff;
        box-shadow: inset -1px -1px #808080;
        white-space: nowrap;
        overflow: hidden;
    }

    .guest-tasks .active {
        background: #eceae6;
        border-color: #404040 #fff #fff #404040;
        box-shadow: inset 1px 1px #808080;
        font-weight: bold;
    }

    .guest-tray {
        display: flex;
        align-items: center;
        gap: 1px;
        height: 15px;
        margin-left: auto;
        margin-right: 1px;
        padding: 0 6px 0 2px;
        border: 1px solid;
        border-color: #808080 #fff #fff #808080;
    }

    .guest-tray svg {
        width: 12px;
        height: 12px;
    }

    .guest-tray b {
        font-size: 10px;
        margin-right: 12px;
    }

    .guest-tray span {
        margin-left: 6px;
    }

    .vbox-status {
        display: flex;
        align-items: center;
        justify-content: flex-end;
        gap: 2px;
        height: 15px;
        background: #f0f0f0;
    }

    .vbox-status svg {
        width: 12px;
        height: 12px;
    }

    .vbox-status span {
        font: 8px "Open Sans", sans-serif;
    }

    /* host taskbar */
    .host-bar {
        position: relative;
        display: flex;
        align-items: center;
        height: 30px;
        box-sizing: border-box;
        border-top: 1px solid #4d7ea8;
        background: linear-gradient(90deg, #1170bd, #1f93dc 8%, #2cb0f0 18%, #35b8fa 35%, #229af0 48%, #1d8cec 65%, #127be0 78%, #1161b8 84%, #15519b);
    }

    .glow {
        position: absolute;
        left: 684px;
        top: 0;
        width: 340px;
        height: 29px;
        opacity: 0.8;
    }

    .orb {
        margin: 0 9px 0 6px;
    }

    .orb svg {
        width: 28px;
        height: 28px;
    }

    .apps {
        flex: 0 1 603px;
        display: flex;
        justify-content: space-between;
    }

    .app {
        display: grid;
        place-items: center;
        width: 45px;
        height: 29px;
        border-radius: 2px;
    }

    .app svg {
        width: 24px;
        height: 24px;
    }

    .open {
        border: 1px solid #cdeafb;
        background: linear-gradient(#b9e4fa, #7fcbf3);
    }

    .stack {
        width: 39px;
        margin-right: 6px;
        box-shadow: 3px 0 #4aa9e4, 4px 0 #bfe3f8;
    }

    .alert {
        border: 1px solid #aa6f86;
        background: linear-gradient(90deg, #ad5263, #e2a9ac 50%, #ad5263);
    }

    .running {
        border: 1px solid #a8d5f6;
        background: linear-gradient(#7bbdf2, #3f9ae9);
    }

    .host-tray {
        position: relative;
        display: flex;
        align-items: center;
        gap: 6px;
        height: 100%;
        margin-left: auto;
        color: #fff;
    }

    .host-tray svg {
        width: 12px;
        height: 12px;
    }

    time {
        font: 9px/13px Roboto, sans-serif;
        text-align: center;
        margin-right: -2px;
    }

    .peek {
        width: 9px;
        height: 100%;
        background: #1c4c8c;
        border-left: 1px solid #6f9fce;
    }
</style>
